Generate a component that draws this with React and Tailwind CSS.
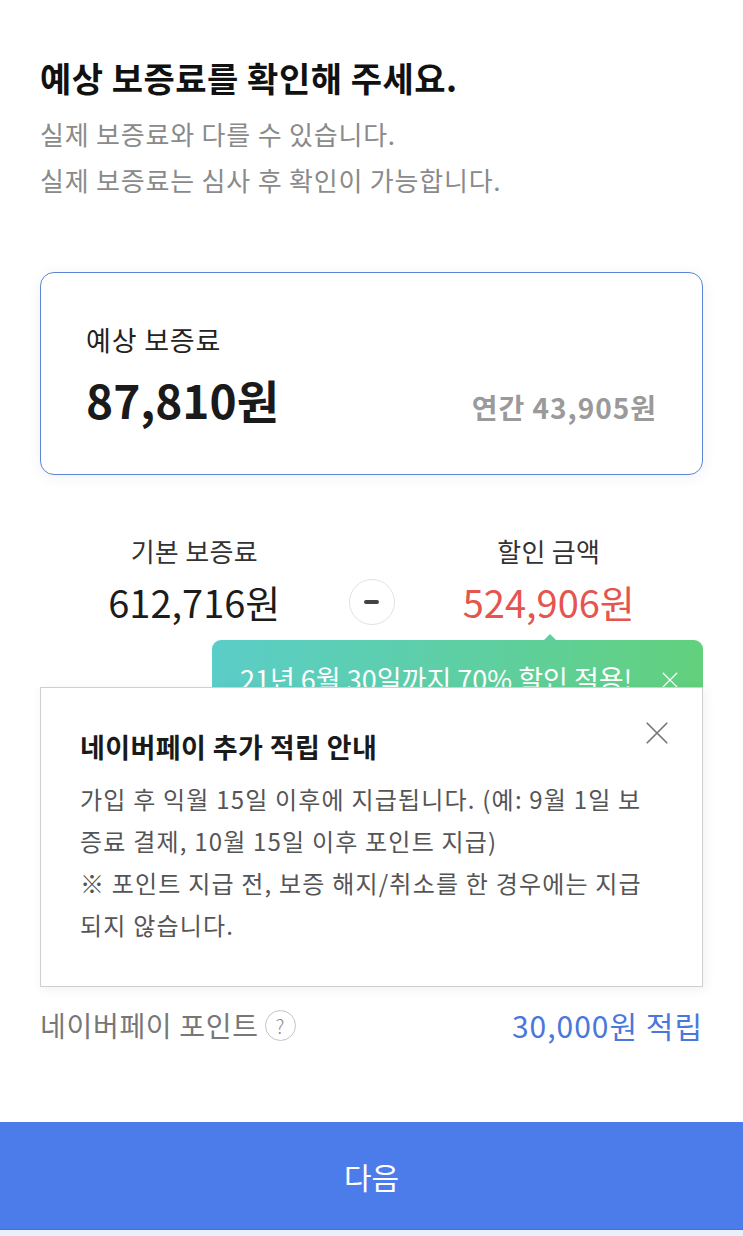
import React from 'react';

const font = { fontFamily: '"Noto Sans CJK KR", "Noto Sans", sans-serif' };

const CloseIcon = ({ className }) => (
  <svg viewBox="0 0 24 24" className={className} fill="none" stroke="currentColor" strokeWidth="1.6" strokeLinecap="round">
    <path d="M3 3L21 21M21 3L3 21" />
  </svg>
);

const App = () => {
  return (
    <div className="w-[743px] h-[1236px] bg-white flex flex-col overflow-hidden" style={font}>
      <div className="px-[40px]">
        <h1 className="mt-[57px] text-[34px] leading-[42px] font-bold text-[#111] tracking-[0.5px]">
          예상 보증료를 확인해 주세요.
        </h1>
        <p className="mt-[12px] text-[26px] leading-[46px] text-[#8a8a8a] tracking-[0.8px]">
          실제 보증료와 다를 수 있습니다.
          <br />
          실제 보증료는 심사 후 확인이 가능합니다.
        </p>

        <div className="mt-[69px] h-[203px] rounded-[14px] border-[1.5px] border-[#5d85d6] bg-white shadow-[0_2px_14px_rgba(60,80,120,0.08)] pl-[45px] pr-[45px] pt-[50px]">
          <div className="text-[27px] leading-[34px] text-[#222] tracking-[0.8px]">예상 보증료</div>
          <div className="mt-[15px] flex items-baseline justify-between">
            <span className="text-[46px] leading-[54px] font-bold text-[#1a1a1a]">87,810원</span>
            <span className="text-[28px] leading-[34px] font-semibold text-[#9a9a9a] tracking-[1px]">연간 43,905원</span>
          </div>
        </div>

        <div className="mt-[59px] grid grid-cols-[1fr_46px_1fr] items-end">
          <div className="flex flex-col items-center">
            <div className="text-[26px] leading-[34px] text-[#333] tracking-[0.3px]">기본 보증료</div>
            <div className="mt-[11px] text-[38px] leading-[46px] text-[#1c1c1c]">612,716원</div>
          </div>
          <div className="h-[46px] flex items-center justify-center">
            <div className="w-[46px] h-[46px] rounded-full border-[1.5px] border-[#e2e2e2] flex items-center justify-center">
              <div className="w-[15px] h-[4px] rounded-full bg-[#444]" />
            </div>
          </div>
          <div className="flex flex-col items-center">
            <div className="text-[26px] leading-[34px] text-[#333] tracking-[0.3px]">할인 금액</div>
            <div className="mt-[11px] text-[38px] leading-[46px] text-[#e5544e]">524,906원</div>
          </div>
        </div>

        <div className="relative mt-[15px]">
          <div className="ml-[172px] relative h-[80px] rounded-[9px] bg-gradient-to-r from-[#5bcdc8] to-[#62d07c] pt-[21px] pl-[28px] pr-[24px] flex items-start justify-between">
            <div className="absolute -top-[6px] left-[331px] w-0 h-0 border-l-[7px] border-r-[7px] border-b-[7px] border-l-transparent border-r-transparent border-b-[#5fcf9e]" />
            <span className="text-[27px] leading-[36px] text-white">21년 6월 30일까지 70% 할인 적용!</span>
            <CloseIcon className="w-[18px] h-[18px] text-white mt-[10px]" />
          </div>

          <div className="absolute left-0 top-[47px] w-[663px] h-[300px] bg-white border border-[#cfcfcf] shadow-[2px_2px_10px_rgba(60,70,120,0.08)] pl-[39px] pr-[20px] pt-[41px]">
            <CloseIcon className="absolute right-[32px] top-[32px] w-[26px] h-[26px] text-[#777]" />
            <div className="text-[27px] leading-[36px] font-bold text-[#1a1a1a] tracking-[0.4px]">네이버페이 추가 적립 안내</div>
            <div className="mt-[13px] text-[24px] leading-[42px] text-[#555] tracking-[1.2px] whitespace-nowrap">
              <div>가입 후 익월 15일 이후에 지급됩니다. (예: 9월 1일 보</div>
              <div>증료 결제, 10월 15일 이후 포인트 지급)</div>
              <div>※ 포인트 지급 전, 보증 해지/취소를 한 경우에는 지급</div>
              <div>되지 않습니다.</div>
            </div>
          </div>
        </div>

        <div className="mt-[287px] flex items-center justify-between">
          <div className="flex items-center">
            <span className="text-[28px] leading-[36px] text-[#777] tracking-[0.7px]">네이버페이 포인트</span>
            <span className="ml-[6px] w-[31px] h-[31px] rounded-full border-[1.5px] border-[#c4c4c4] flex items-center justify-center text-[19px] leading-none font-light text-[#888]">?</span>
          </div>
          <span className="text-[30px] leading-[36px] text-[#4a77dc] tracking-[1px]">30,000원 적립</span>
        </div>
      </div>

      <div className="mt-auto">
        <button className="w-full h-[108px] bg-[#4c7bea] text-white text-[30px] leading-[36px] flex items-center justify-center border-b border-[#4670d8]">
          다음
        </button>
        <div className="h-[6px] bg-[#eaf0fa]" />
      </div>
    </div>
  );
};

export default App;
